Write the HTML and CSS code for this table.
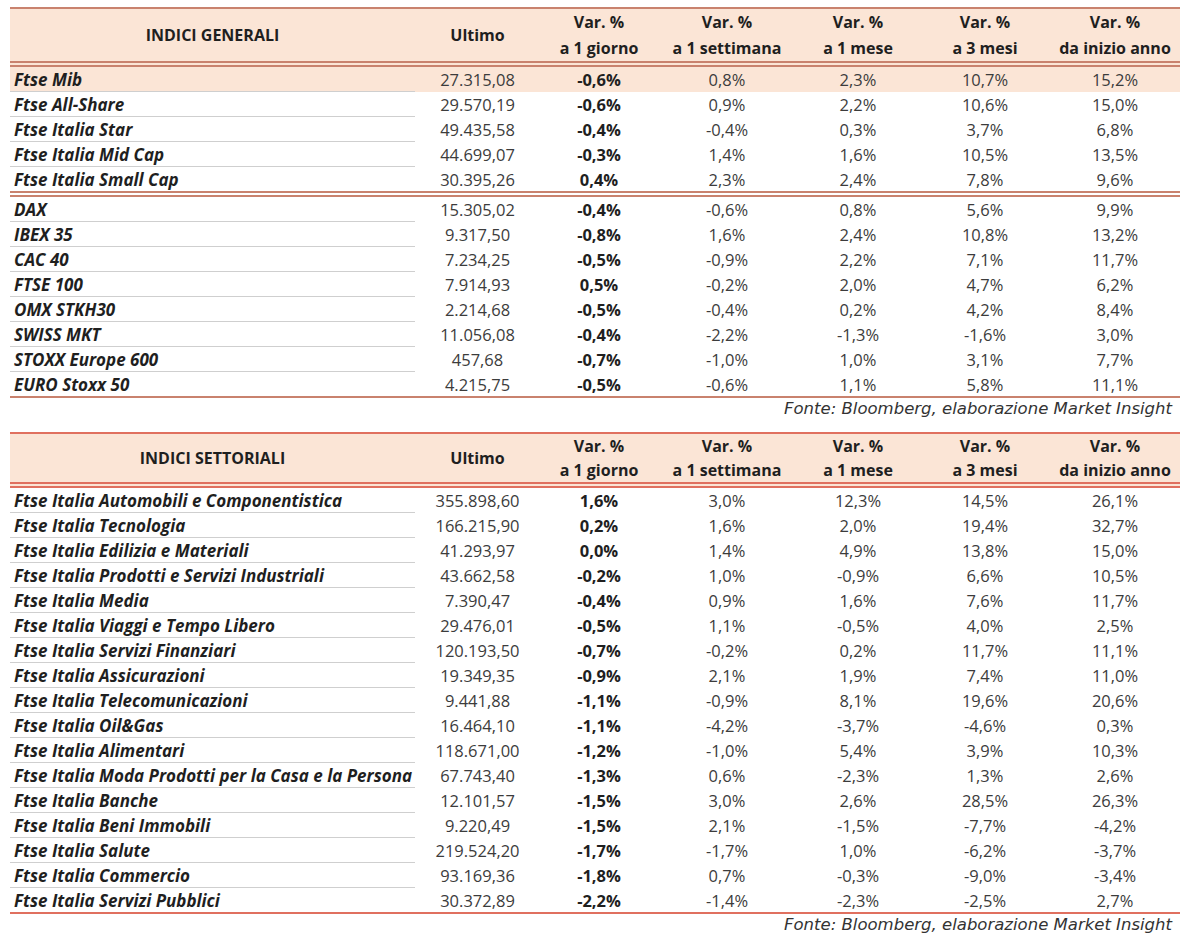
FILE: index.html
```html
<!DOCTYPE html>
<html lang="it">
<head>
<meta charset="utf-8">
<title>Indici</title>
<link rel="stylesheet" href="styles.css">
</head>
<body>
<div class="page">
<table class="tbl t1">
  <thead>
    <tr>
      <th class="c-name">INDICI GENERALI</th>
      <th class="c-last">Ultimo</th>
      <th class="c-d">Var. %<br>a 1 giorno</th>
      <th class="c-w">Var. %<br>a 1 settimana</th>
      <th class="c-m">Var. %<br>a 1 mese</th>
      <th class="c-3m">Var. %<br>a 3 mesi</th>
      <th class="c-y">Var. %<br>da inizio anno</th>
    </tr>
  </thead>
  <tbody>
    <tr class="hl"><td class="name">Ftse Mib</td><td>27.315,08</td><td class="b">-0,6%</td><td>0,8%</td><td>2,3%</td><td>10,7%</td><td>15,2%</td></tr>
    <tr><td class="name">Ftse All-Share</td><td>29.570,19</td><td class="b">-0,6%</td><td>0,9%</td><td>2,2%</td><td>10,6%</td><td>15,0%</td></tr>
    <tr><td class="name">Ftse Italia Star</td><td>49.435,58</td><td class="b">-0,4%</td><td>-0,4%</td><td>0,3%</td><td>3,7%</td><td>6,8%</td></tr>
    <tr><td class="name">Ftse Italia Mid Cap</td><td>44.699,07</td><td class="b">-0,3%</td><td>1,4%</td><td>1,6%</td><td>10,5%</td><td>13,5%</td></tr>
    <tr class="split"><td class="name">Ftse Italia Small Cap</td><td>30.395,26</td><td class="b">0,4%</td><td>2,3%</td><td>2,4%</td><td>7,8%</td><td>9,6%</td></tr>
    <tr><td class="name">DAX</td><td>15.305,02</td><td class="b">-0,4%</td><td>-0,6%</td><td>0,8%</td><td>5,6%</td><td>9,9%</td></tr>
    <tr><td class="name">IBEX 35</td><td>9.317,50</td><td class="b">-0,8%</td><td>1,6%</td><td>2,4%</td><td>10,8%</td><td>13,2%</td></tr>
    <tr><td class="name">CAC 40</td><td>7.234,25</td><td class="b">-0,5%</td><td>-0,9%</td><td>2,2%</td><td>7,1%</td><td>11,7%</td></tr>
    <tr><td class="name">FTSE 100</td><td>7.914,93</td><td class="b">0,5%</td><td>-0,2%</td><td>2,0%</td><td>4,7%</td><td>6,2%</td></tr>
    <tr><td class="name">OMX STKH30</td><td>2.214,68</td><td class="b">-0,5%</td><td>-0,4%</td><td>0,2%</td><td>4,2%</td><td>8,4%</td></tr>
    <tr><td class="name">SWISS MKT</td><td>11.056,08</td><td class="b">-0,4%</td><td>-2,2%</td><td>-1,3%</td><td>-1,6%</td><td>3,0%</td></tr>
    <tr><td class="name">STOXX Europe 600</td><td>457,68</td><td class="b">-0,7%</td><td>-1,0%</td><td>1,0%</td><td>3,1%</td><td>7,7%</td></tr>
    <tr class="last"><td class="name">EURO Stoxx 50</td><td>4.215,75</td><td class="b">-0,5%</td><td>-0,6%</td><td>1,1%</td><td>5,8%</td><td>11,1%</td></tr>
  </tbody>
</table>
<p class="source">Fonte: Bloomberg, elaborazione Market Insight</p>

<table class="tbl t2">
  <thead>
    <tr>
      <th class="c-name">INDICI SETTORIALI</th>
      <th class="c-last">Ultimo</th>
      <th class="c-d">Var. %<br>a 1 giorno</th>
      <th class="c-w">Var. %<br>a 1 settimana</th>
      <th class="c-m">Var. %<br>a 1 mese</th>
      <th class="c-3m">Var. %<br>a 3 mesi</th>
      <th class="c-y">Var. %<br>da inizio anno</th>
    </tr>
  </thead>
  <tbody>
    <tr><td class="name">Ftse Italia Automobili e Componentistica</td><td>355.898,60</td><td class="b">1,6%</td><td>3,0%</td><td>12,3%</td><td>14,5%</td><td>26,1%</td></tr>
    <tr><td class="name">Ftse Italia Tecnologia</td><td>166.215,90</td><td class="b">0,2%</td><td>1,6%</td><td>2,0%</td><td>19,4%</td><td>32,7%</td></tr>
    <tr><td class="name">Ftse Italia Edilizia e Materiali</td><td>41.293,97</td><td class="b">0,0%</td><td>1,4%</td><td>4,9%</td><td>13,8%</td><td>15,0%</td></tr>
    <tr><td class="name">Ftse Italia Prodotti e Servizi Industriali</td><td>43.662,58</td><td class="b">-0,2%</td><td>1,0%</td><td>-0,9%</td><td>6,6%</td><td>10,5%</td></tr>
    <tr><td class="name">Ftse Italia Media</td><td>7.390,47</td><td class="b">-0,4%</td><td>0,9%</td><td>1,6%</td><td>7,6%</td><td>11,7%</td></tr>
    <tr><td class="name">Ftse Italia Viaggi e Tempo Libero</td><td>29.476,01</td><td class="b">-0,5%</td><td>1,1%</td><td>-0,5%</td><td>4,0%</td><td>2,5%</td></tr>
    <tr><td class="name">Ftse Italia Servizi Finanziari</td><td>120.193,50</td><td class="b">-0,7%</td><td>-0,2%</td><td>0,2%</td><td>11,7%</td><td>11,1%</td></tr>
    <tr><td class="name">Ftse Italia Assicurazioni</td><td>19.349,35</td><td class="b">-0,9%</td><td>2,1%</td><td>1,9%</td><td>7,4%</td><td>11,0%</td></tr>
    <tr><td class="name">Ftse Italia Telecomunicazioni</td><td>9.441,88</td><td class="b">-1,1%</td><td>-0,9%</td><td>8,1%</td><td>19,6%</td><td>20,6%</td></tr>
    <tr><td class="name">Ftse Italia Oil&amp;Gas</td><td>16.464,10</td><td class="b">-1,1%</td><td>-4,2%</td><td>-3,7%</td><td>-4,6%</td><td>0,3%</td></tr>
    <tr><td class="name">Ftse Italia Alimentari</td><td>118.671,00</td><td class="b">-1,2%</td><td>-1,0%</td><td>5,4%</td><td>3,9%</td><td>10,3%</td></tr>
    <tr><td class="name">Ftse Italia Moda Prodotti per la Casa e la Persona</td><td>67.743,40</td><td class="b">-1,3%</td><td>0,6%</td><td>-2,3%</td><td>1,3%</td><td>2,6%</td></tr>
    <tr><td class="name">Ftse Italia Banche</td><td>12.101,57</td><td class="b">-1,5%</td><td>3,0%</td><td>2,6%</td><td>28,5%</td><td>26,3%</td></tr>
    <tr><td class="name">Ftse Italia Beni Immobili</td><td>9.220,49</td><td class="b">-1,5%</td><td>2,1%</td><td>-1,5%</td><td>-7,7%</td><td>-4,2%</td></tr>
    <tr><td class="name">Ftse Italia Salute</td><td>219.524,20</td><td class="b">-1,7%</td><td>-1,7%</td><td>1,0%</td><td>-6,2%</td><td>-3,7%</td></tr>
    <tr><td class="name">Ftse Italia Commercio</td><td>93.169,36</td><td class="b">-1,8%</td><td>0,7%</td><td>-0,3%</td><td>-9,0%</td><td>-3,4%</td></tr>
    <tr class="last"><td class="name">Ftse Italia Servizi Pubblici</td><td>30.372,89</td><td class="b">-2,2%</td><td>-1,4%</td><td>-2,3%</td><td>-2,5%</td><td>2,7%</td></tr>
  </tbody>
</table>
<p class="source">Fonte: Bloomberg, elaborazione Market Insight</p>
</div>
</body>
</html>
```
FILE: styles.css
```css
html, body {
  margin: 0;
  padding: 0;
  background: #ffffff;
}
.page {
  padding: 7px 10px 0 10px;
  font-family: "Open Sans", "Liberation Sans", sans-serif;
  color: #222;
}
.tbl {
  width: 1170px;
  border-collapse: separate;
  border-spacing: 0;
  table-layout: fixed;
  --line: #c9826e;
}
.t2 { --line: #e0705f; }
.tbl th {
  background: #fbe5d6;
  font-weight: 700;
  font-size: 16px;
  line-height: 26px;
  text-align: center;
  color: #1f1f1f;
  padding: 0;
  border-top: 2px solid var(--line);
  border-bottom: 6px double var(--line);
}
.t2 th { line-height: 24px; }
.c-name { width: 405px; }
.c-last { width: 125px; }
.c-d { width: 118px; }
.c-w { width: 138px; }
.c-m { width: 124px; }
.c-3m { width: 130px; }
.c-y { width: 130px; }
.tbl td {
  font-size: 16.5px;
  line-height: 23px;
  padding: 1px 0 0 0;
  text-align: center;
  color: #3c3c3c;
  font-weight: 400;
  border-bottom: 1px solid transparent;
  white-space: nowrap;
}
.tbl td.name {
  text-align: left;
  padding-left: 4px;
  font-size: 17px;
  font-weight: 700;
  font-style: italic;
  color: #1f1f1f;
  border-bottom-color: #cfcfcf;
}
.tbl td.b {
  font-weight: 700;
  color: #1f1f1f;
}
.tbl tr.hl td { background: #fbe5d6; }
.tbl tr.split td {
  border-bottom: 6px double var(--line);
}
.tbl tr.last td {
  border-bottom: 2px solid var(--line);
}
.source {
  margin: 0 0 12px 0;
  width: 1162px;
  text-align: right;
  font-family: "DejaVu Sans", sans-serif;
  font-style: italic;
  font-size: 16.5px;
  line-height: 22px;
  color: #333;
  font-weight: 200;
}
```
